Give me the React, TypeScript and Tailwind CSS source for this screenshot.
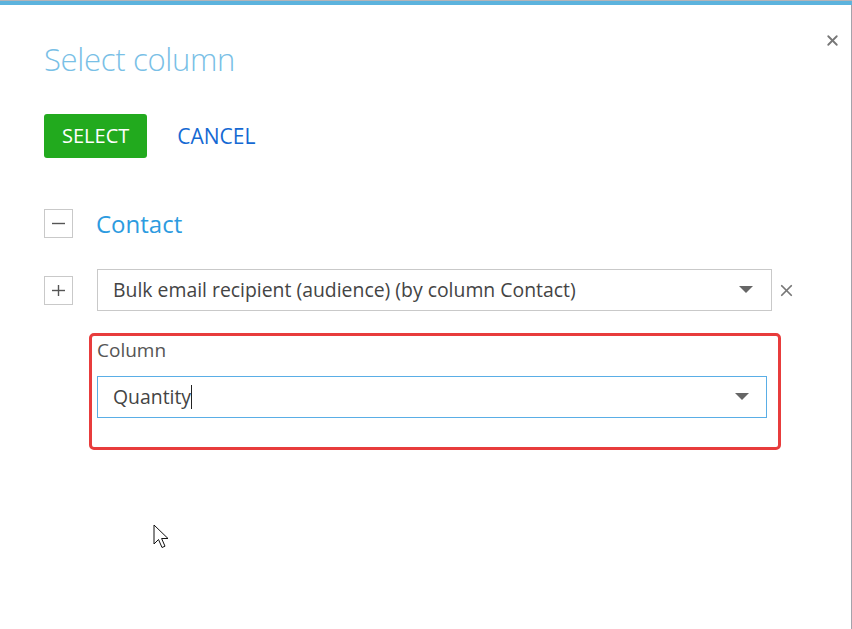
import { X } from "lucide-react";

function Caret() {
  return (
    <svg width="14" height="8" viewBox="0 0 14 8" className="shrink-0">
      <path d="M0 0 H14 L7 7 Z" fill="#666" />
    </svg>
  );
}

function BoxButton({ sign }: { sign: "plus" | "minus" }) {
  return (
    <div className="w-[29px] h-[29px] border border-[#c9c9c9] flex items-center justify-center shrink-0">
      <svg width="13" height="13" viewBox="0 0 13 13">
        <path d="M0 6.5 H13" stroke="#555" strokeWidth="1.4" />
        {sign === "plus" && <path d="M6.5 1 V12" stroke="#555" strokeWidth="1.4" />}
      </svg>
    </div>
  );
}

function Pointer() {
  return (
    <svg width="20" height="28" viewBox="0 0 20 28" className="absolute left-[153px] top-[519px]">
      <path
        d="M1 1 V20 L5.5 15.5 L9 23.5 L12 22.2 L8.6 14.5 L15 14.5 Z"
        fill="#fff"
        stroke="#111"
        strokeWidth="1"
        strokeLinejoin="round"
      />
    </svg>
  );
}

export default function App() {
  return (
    <div
      className="relative w-[852px] h-[629px] overflow-hidden bg-white"
      style={{ fontFamily: '"Open Sans", "Noto Sans", sans-serif' }}
    >
      {/* top strip */}
      <div className="h-px bg-[#b4b4b8]" />
      <div className="h-[4px] bg-[#5cb3dd]" />

      <div className="relative h-[624px] border-r border-[#a3a3ab]">
        <button className="absolute right-[10px] top-[27px] text-[#777]">
          <X size={17} strokeWidth={2.6} />
        </button>

        <div className="pl-[44px] pt-[34px]">
          <h1 className="text-[31px] font-light leading-[40px] tracking-[-0.3px] text-[#79c0e6]">
            Select column
          </h1>

          <div className="flex items-center mt-[35px] gap-[30px]">
            <button className="h-[44px] px-[18px] rounded-[3px] bg-[#22aa1e] text-white text-[20px] leading-none">
              SELECT
            </button>
            <button className="text-[21px] text-[#1569d3] leading-none">CANCEL</button>
          </div>

          <div className="flex items-center mt-[51px] gap-[23px]">
            <BoxButton sign="minus" />
            <span className="text-[24px] text-[#2d9be0] leading-none">Contact</span>
          </div>

          <div className="flex items-center mt-[31px]">
            <BoxButton sign="plus" />
            <div className="ml-[24px] w-[675px] h-[42px] border border-[#c9c9c9] flex items-center pl-[15px] pr-[18px]">
              <span className="flex-1 text-[19.4px] text-[#444]">
                Bulk email recipient (audience) (by column Contact)
              </span>
              <Caret />
            </div>
            <X size={19} strokeWidth={2.2} className="ml-[5px] text-[#777]" />
          </div>

          <div className="ml-[45px] mt-[22px] w-[692px] h-[117px] border-[3px] border-[#e83c3c] rounded-[5px] pl-[5px] pt-[2px]">
            <div className="text-[19px] text-[#555] leading-[24px]">Column</div>
            <div className="mt-[14px] w-[670px] h-[42px] border border-[#5aaee6] flex items-center pl-[15px] pr-[17px]">
              <span className="flex-1 flex items-center text-[19.4px] text-[#444]">
                Quantity
                <span className="inline-block w-px h-[24px] bg-[#222]" />
              </span>
              <Caret />
            </div>
          </div>
        </div>

        <Pointer />
      </div>
    </div>
  );
}
